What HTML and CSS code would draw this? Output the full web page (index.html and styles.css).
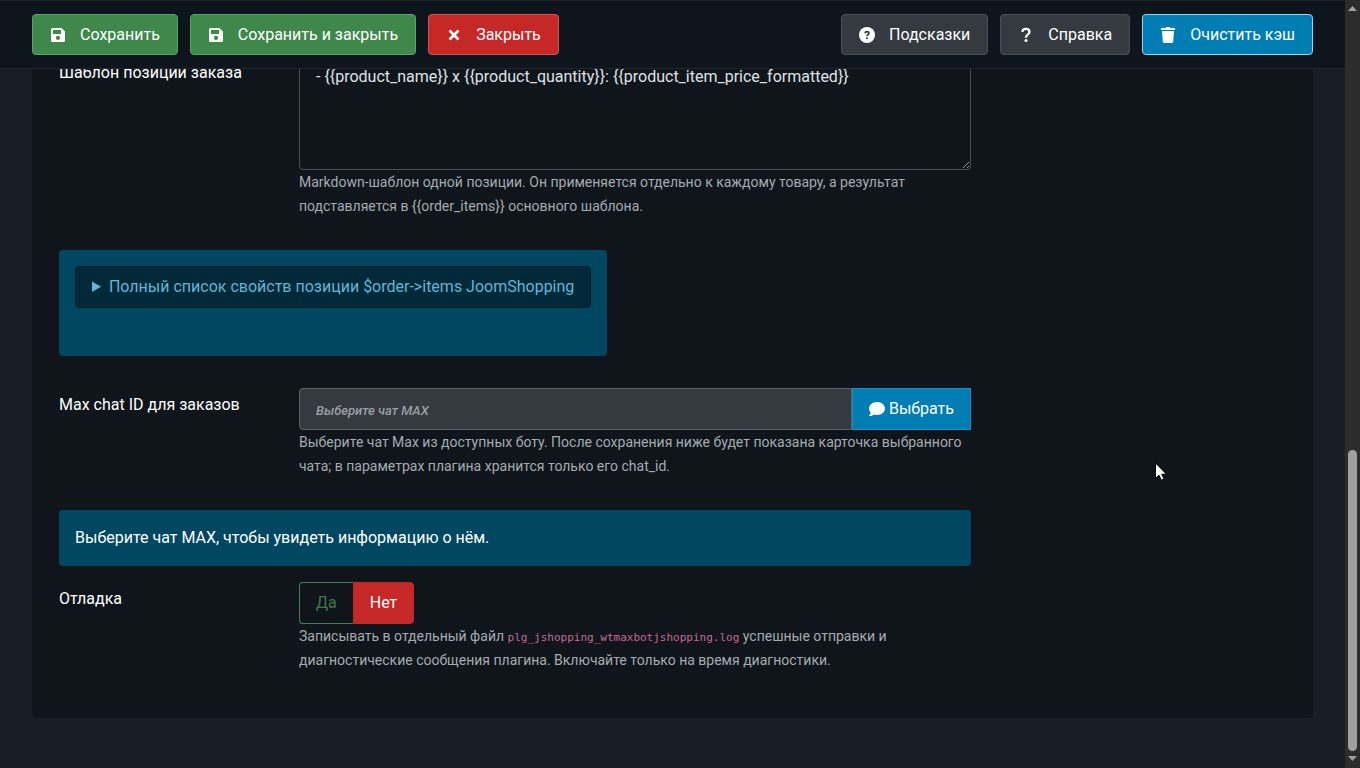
FILE: index.html
```html
<!DOCTYPE html>
<html lang="ru">
<head>
    <meta charset="UTF-8">
    <meta name="viewport" content="width=device-width, initial-scale=1.0">
    <title>Плагины: JoomShopping</title>
    <link rel="stylesheet" href="styles.css">
</head>
<body>
    <div class="page">
        <header class="toolbar">
            <button type="button" class="btn btn-success">
                <svg class="icon" viewBox="0 0 16 16"><path fill="currentColor" fill-rule="evenodd" d="M2 1h9.500L15 4.500V13.500a1.500 1.500 0 0 1-1.500 1.500h-11A1.500 1.500 0 0 1 1 13.500v-11A1.500 1.500 0 0 1 2.500 1zM3 3v4h8V3zM8 8.800a2.100 2.100 0 1 0 0 4.200 2.100 2.100 0 0 0 0-4.200z"/></svg>
                Сохранить
            </button>
            <button type="button" class="btn btn-success">
                <svg class="icon" viewBox="0 0 16 16"><path fill="currentColor" fill-rule="evenodd" d="M2 1h9.500L15 4.500V13.500a1.500 1.500 0 0 1-1.500 1.500h-11A1.500 1.500 0 0 1 1 13.500v-11A1.500 1.500 0 0 1 2.500 1zM3 3v4h8V3zM8 8.800a2.100 2.100 0 1 0 0 4.200 2.100 2.100 0 0 0 0-4.200z"/></svg>
                Сохранить и закрыть
            </button>
            <button type="button" class="btn btn-danger">
                <svg class="icon" viewBox="0 0 16 16"><path fill="none" stroke="currentColor" stroke-width="2.600" d="M3.500 3.500l9 9M12.500 3.500l-9 9"/></svg>
                Закрыть
            </button>
            <button type="button" class="btn btn-dark push">
                <svg class="icon" viewBox="0 0 16 16"><circle cx="8" cy="8" r="8" fill="currentColor"/><path fill="none" stroke="#343a40" stroke-width="1.600" d="M6.100 6.300C6.200 4 10 4 10 6.300C10 7.600 8 7.500 8 9.300"/><circle cx="8" cy="11.300" r="1" fill="#343a40"/></svg>
                Подсказки
            </button>
            <button type="button" class="btn btn-dark">
                <svg class="icon" viewBox="0 0 16 16"><path fill="none" stroke="currentColor" stroke-width="2.300" d="M4.300 4.800C4.800 0.800 11.500 1 11.500 4.900C11.500 7.500 8 7.200 8 10.800"/><circle cx="8" cy="13.500" r="1.500" fill="currentColor"/></svg>
                Справка
            </button>
            <button type="button" class="btn btn-primary">
                <svg class="icon" viewBox="0 0 16 16"><path fill="currentColor" d="M1 1h4.500l.7-1h3.600l.7 1H15v2H1zM2 4h12l-.8 10.500a1.500 1.500 0 0 1-1.500 1.500H4.300a1.500 1.500 0 0 1-1.500-1.500z"/></svg>
                Очистить кэш
            </button>
        </header>

        <main class="content">
            <form class="panel">
                <div class="row">
                    <label for="item_template">Шаблон позиции заказа</label>
                    <div class="field">
                        <textarea id="item_template" class="input template">- {{product_name}} x {{product_quantity}}: {{product_item_price_formatted}}</textarea>
                        <p class="hint">Markdown-шаблон одной позиции. Он применяется отдельно к каждому товару, а результат подставляется в {{order_items}} основного шаблона.</p>
                    </div>
                </div>

                <div class="alert alert-list">
                    <details>
                        <summary>Полный список свойств позиции $order-&gt;items JoomShopping</summary>
                    </details>
                </div>

                <div class="row">
                    <label for="chat_id">Max chat ID для заказов</label>
                    <div class="field">
                        <div class="input-group">
                            <input type="text" id="chat_id" class="input" placeholder="Выберите чат MAX" readonly>
                            <button type="button" class="select-btn">
                                <svg class="icon-chat" viewBox="0 0 16 16"><path fill="currentColor" d="M8 1c4.500 0 8 2.900 8 6.500S12.500 14 8 14c-1.200 0-2.300-.2-3.300-.6C3.600 14.300 2 15 .4 15c-.4 0-.5-.4-.2-.7C.9 13.500 1.600 12.500 1.800 11.600.7 10.500 0 9.100 0 7.500 0 3.900 3.500 1 8 1z"/></svg>
                                Выбрать
                            </button>
                        </div>
                        <p class="hint">Выберите чат Max из доступных боту. После сохранения ниже будет показана карточка выбранного чата; в параметрах плагина хранится только его chat_id.</p>
                    </div>
                </div>

                <div class="alert alert-chat">Выберите чат MAX, чтобы увидеть информацию о нём.</div>

                <div class="row" role="radiogroup" aria-labelledby="debug_label">
                    <span class="label" id="debug_label">Отладка</span>
                    <div class="field">
                        <div class="switcher">
                            <input type="radio" name="debug" id="debug_yes">
                            <label for="debug_yes" class="yes">Да</label>
                            <input type="radio" name="debug" id="debug_no" checked>
                            <label for="debug_no" class="no">Нет</label>
                        </div>
                        <p class="hint">Записывать в отдельный файл <code>plg_jshopping_wtmaxbotjshopping.log</code> успешные отправки и диагностические сообщения плагина. Включайте только на время диагностики.</p>
                    </div>
                </div>
            </form>
        </main>
    </div>

    <div class="scrollbar" aria-hidden="true">
        <svg class="arrow" viewBox="0 0 9 6"><path fill="#a0a0a0" d="M4.500 0L9 5H0z"/></svg>
        <div class="track"><div class="thumb"></div></div>
        <svg class="arrow" viewBox="0 0 9 6"><path fill="#a0a0a0" d="M0 0h9L4.500 5z"/></svg>
    </div>

    <svg class="cursor" viewBox="0 0 12 19" aria-hidden="true"><path fill="#fff" stroke="#000" d="M.5 1v15.500l3.500-3.300 2.300 5 2.700-1.200-2.200-4.800h4.700z"/></svg>
</body>
</html>
```
FILE: styles.css
```css
* {
    box-sizing: border-box;
}

body {
    margin: 0;
    height: 100vh;
    display: flex;
    overflow: hidden;
    background-color: #181e25;
    color: #fff;
    color-scheme: dark;
    font-family: Roboto, "Liberation Sans", sans-serif;
    font-size: 16px;
    line-height: 24px;
}

button, input, textarea {
    font: inherit;
}

.page {
    flex: 1;
    min-width: 0;
    display: flex;
    flex-direction: column;
}

/* toolbar */
.toolbar {
    display: flex;
    gap: 12px;
    padding: 13px 32px;
    background-color: #0f151c;
    border-top: 1px solid #1d2329;
    border-bottom: 1px solid #20262d;
}

.btn {
    display: flex;
    align-items: center;
    gap: 14px;
    height: 41px;
    padding: 0 17px;
    border: 1px solid;
    border-radius: 4px;
    color: #fff;
    white-space: nowrap;
    cursor: pointer;
}

.icon {
    width: 16px;
    height: 16px;
}

.btn-success {
    background-color: #3f874b;
    border-color: #55a563;
}

.btn-danger {
    background-color: #c52827;
    border-color: #d25656;
}

.btn-dark {
    background-color: #343a40;
    border-color: #4a5057;
}

.btn-primary {
    background-color: #007db3;
    border-color: #9ed3ea;
}

.push {
    margin-left: auto;
}

/* form, scrolled to its end */
.content {
    flex: 1;
    min-height: 0;
    overflow: hidden;
    display: flex;
    flex-direction: column;
    justify-content: flex-end;
    padding: 0 32px 50px;
}

.panel {
    padding: 27px 27px 46px;
    background-color: #0f151b;
    border-radius: 4px;
}

.row {
    display: grid;
    grid-template-columns: 240px 1fr;
    max-width: 912px;
}

.row > label, .label {
    padding-top: 5px;
}

.input {
    display: block;
    width: 100%;
    padding: 8px 16px;
    border: 1px solid #494f55;
    border-radius: 4px;
    background-color: #343a40;
    color: #dfe3e7;
}

.template {
    height: 114px;
    background-color: #0f151b;
    resize: both;
}

.hint {
    margin: 0;
    font-size: 14px;
    color: #a5abb0;
}

.hint code {
    font-family: "DejaVu Sans Mono", monospace;
    font-size: 11px;
    line-height: 16px;
    color: #c46a94;
}

.alert {
    background-color: #004761;
    border-radius: 4px;
    padding: 16px;
}

.alert-list {
    width: fit-content;
    margin: 32px 0;
    padding-bottom: 48px;
}

.alert-chat {
    max-width: 912px;
    margin: 32px 0 16px;
}

details {
    padding: 8px 16px;
    background-color: #002a3a;
    border: 1px solid #001c27;
    border-radius: 4px;
    color: #66b5d4;
}

.input-group {
    display: flex;
}

.input-group .input {
    flex: 1;
    height: 42px;
    border-color: #5a6066;
    border-radius: 4px 0 0 4px;
}

.input-group .input::placeholder {
    color: #9b9fa3;
    font-size: 13px;
    font-style: italic;
    font-weight: 500;
}

.select-btn {
    display: flex;
    align-items: center;
    gap: 4px;
    padding: 0 16px;
    background-color: #007db3;
    border: 1px solid #1691c8;
    color: #fff;
    cursor: pointer;
}

.icon-chat {
    width: 16px;
    height: 16px;
}

/* yes / no switcher */
.switcher {
    display: flex;
}

.switcher input {
    appearance: none;
    width: 0;
    margin: 0;
}

.switcher label {
    padding: 8px 16px;
    border: 1px solid #448355;
    color: #3e754b;
    cursor: pointer;
}

.switcher .yes {
    border-right: 0;
    border-radius: 4px 0 0 4px;
}

.switcher .no {
    background-color: #c52827;
    border-color: #c52827;
    border-radius: 0 4px 4px 0;
    color: #fff;
}

/* scrollbar */
.scrollbar {
    display: flex;
    flex-direction: column;
    align-items: center;
    gap: 5px;
    width: 15px;
    padding: 6px 0;
    background-color: #2c2c2c;
}

.arrow {
    width: 9px;
    height: 6px;
}

.track {
    flex: 1;
    display: flex;
    flex-direction: column;
    justify-content: flex-end;
}

.thumb {
    width: 9px;
    height: 41%;
    border-radius: 5px;
    background-color: #9f9f9f;
}

.cursor {
    position: absolute;
    left: 1155px;
    top: 462px;
    width: 12px;
    height: 19px;
}
```
